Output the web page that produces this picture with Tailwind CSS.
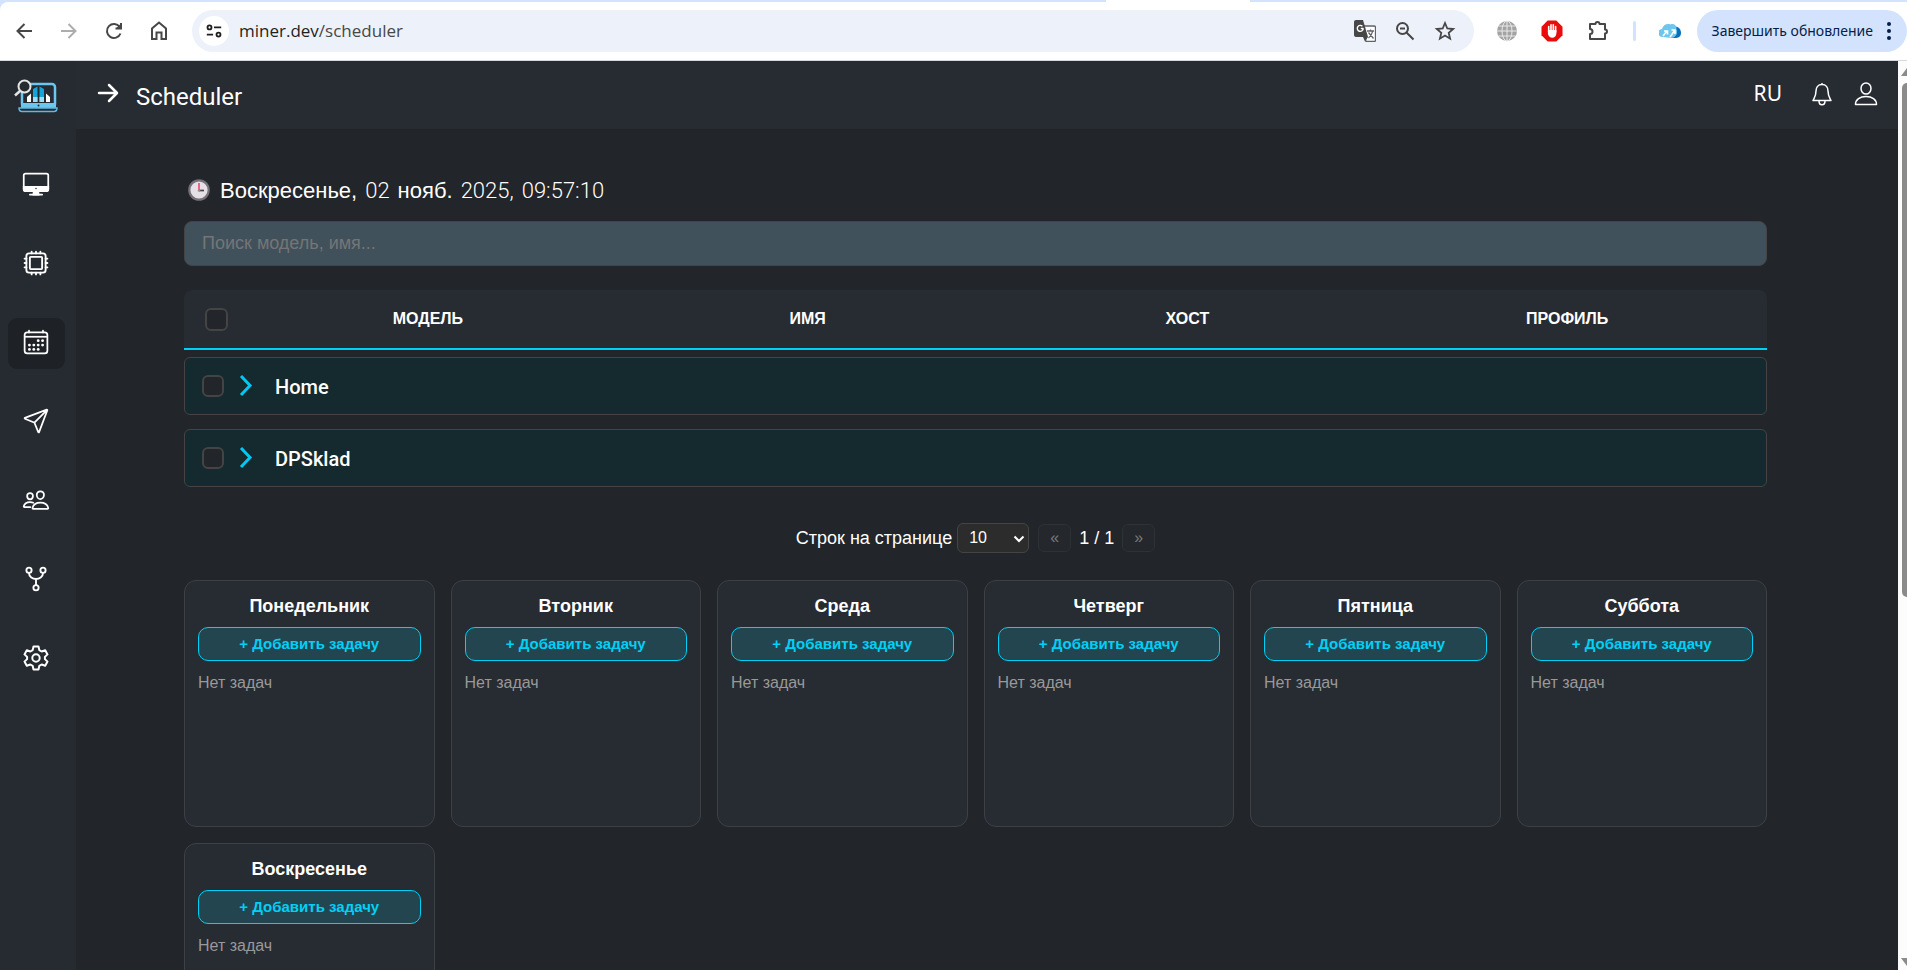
<!-- index.html -->
<!DOCTYPE html>
<html lang="ru">
<head>
    <meta charset="UTF-8">
    <meta name="viewport" content="width=device-width, initial-scale=1.0">
    <title>Scheduler</title>
    <script src="https://cdn.jsdelivr.net/npm/@tailwindcss/browser@4"></script>
</head>
<body class="h-screen flex flex-col overflow-hidden bg-[#222529] text-white font-['Liberation_Sans',sans-serif]">
    <!-- Browser toolbar -->
    <div class="shrink-0 bg-[#d3e3fd]">
        <!-- Bottom edge of the active tab -->
        <div class="h-0.5 pl-[58%]">
            <div class="w-36 h-full bg-white"></div>
        </div>
        <div class="flex items-center h-[59px] rounded-tl-lg bg-white border-b border-[#d5d8dc] text-[#474747] font-['Open_Sans',sans-serif]">
            <div class="flex items-center gap-[21px] pl-3 pr-[21px]">
                <button aria-label="Back">
                    <svg class="w-6 h-6" viewBox="0 0 24 24" fill="none" stroke="currentColor" stroke-width="2"><path d="M20 12H5.500M12.500 5l-7 7 7 7"/></svg>
                </button>
                <button aria-label="Forward" class="text-[#adadad]">
                    <svg class="w-6 h-6" viewBox="0 0 24 24" fill="none" stroke="currentColor" stroke-width="2"><path d="M4 12h14.500M11.500 5l7 7-7 7"/></svg>
                </button>
                <button aria-label="Reload">
                    <svg class="w-6 h-6" viewBox="0 0 24 24" fill="none" stroke="currentColor" stroke-width="2"><path d="M18.500 14.500a7 7 0 1 1-.8-6.500M19 4v5.500h-5.500"/><path d="M19 4.500v5h-5z" fill="currentColor" stroke="none"/></svg>
                </button>
                <button aria-label="Home">
                    <svg class="w-6 h-6" viewBox="0 0 24 24" fill="none" stroke="currentColor" stroke-width="2"><path d="M5 20V9.500l7-6 7 6V20h-4.500v-6.500h-5V20z"/></svg>
                </button>
            </div>
            <div class="flex flex-1 items-center h-[42px] rounded-full bg-[#edf1fa] pl-[7px] pr-[18px]">
                <span class="flex items-center justify-center w-[30px] h-[30px] rounded-full bg-white text-[#1f1f1f]">
                    <svg class="w-[18px] h-[18px]" viewBox="0 0 20 20" fill="none" stroke="currentColor" stroke-width="2"><circle cx="5" cy="6" r="2.200"/><path d="M10 6h8M2 14h7"/><circle cx="15" cy="14" r="2.200"/></svg>
                </span>
                <span class="flex-1 pl-2.5 text-[17px] leading-6 text-[#474747]"><span class="text-[#1f1f1f]">miner.dev</span>/scheduler</span>
                <div class="flex items-center gap-[18px]">
                    <svg class="w-[22px] h-[22px]" viewBox="0 0 22 22"><path d="M9 6h11a1.500 1.500 0 0 1 1.500 1.500V20a1.500 1.500 0 0 1-1.500 1.500h-8z" fill="#fff" stroke="#5f6368" stroke-width="1.300"/><path d="M2 0h7l5 17H2a2 2 0 0 1-2-2V2a2 2 0 0 1 2-2z" fill="#474747"/><path d="M9 17h5l-3 4.500z" fill="#474747"/><path d="M9.500 8.500H6.800M9.300 8.500a3 3 0 1 1-.9-2.300" fill="none" stroke="#fff" stroke-width="1.400"/><path d="M13 11h7M16.500 9.500V11M14.500 12.500l5 6M18.500 11.500c-.5 3-2 5-4 6.500" fill="none" stroke="#5f6368" stroke-width="1.300"/></svg>
                    <svg class="w-[22px] h-[22px]" viewBox="0 0 22 22" fill="none" stroke="currentColor" stroke-width="2"><circle cx="8.500" cy="8.500" r="5.500"/><path d="M12.500 12.500l7 7M6 8.500h5"/></svg>
                    <svg class="w-[22px] h-[22px]" viewBox="0 0 22 22" fill="none" stroke="currentColor" stroke-width="1.800"><path d="M11 3l2.300 5.500 5.900.5-4.500 3.900 1.400 5.800L11 15.600l-5.100 3.100 1.400-5.800L2.800 9l5.900-.5z"/></svg>
                </div>
            </div>
            <div class="flex items-center gap-[23px] pl-[22px] pr-4">
                <svg class="w-[22px] h-[22px]" viewBox="0 0 22 22"><circle cx="11" cy="11" r="10" fill="#a3a3a3"/><g fill="none" stroke="#e9e9e9" stroke-width="1"><ellipse cx="11" cy="11" rx="5" ry="10"/><path d="M11 1v20M1 11h20M2.500 6h17M2.500 16h17"/></g></svg>
                <svg class="w-[22px] h-[22px]" viewBox="0 0 22 22"><path d="M6.700.5h8.600l6.200 6.200v8.600l-6.200 6.200H6.700L.5 15.300V6.700z" fill="#e80c0c"/><path d="M7.700 12V6.500M10 10V4.800M12.300 10V4.800M14.600 12V6.500" stroke="#fff" stroke-width="1.600" stroke-linecap="round"/><path d="M6.900 10h8.500v3c0 3-1.800 4.700-4.200 4.700-2.300 0-3.300-1.200-4.300-3.700z" fill="#fff"/></svg>
                <svg class="w-6 h-6" viewBox="0 0 24 24" fill="none" stroke="currentColor" stroke-width="2" stroke-linejoin="round"><path d="M4 5h5.500a2 2 0 0 1 4 0H19v5.500a2 2 0 0 1 0 4V20H4v-5a2.500 2.500 0 0 0 0-5z"/></svg>
                <span class="w-[3px] h-5 rounded bg-[#d3e3fd]"></span>
                <svg class="w-[22px] h-4" viewBox="0 0 22 16"><path d="M15 4c4-1 7 2 7 6s-3 5-6 5h-4z" fill="#0a6fb8"/><path d="M4 14a4 4 0 0 1-1-8C4 2 8 0 11.500 1.500 15 0 18 3 17.500 6.500c2 3-1 8.500-5 8.500z" fill="#6ec6ee"/><path d="M4 13l4-5M5 8h3.500v3.500M11 14l5-7M12.500 7H16v4" fill="none" stroke="#fff" stroke-width="1.600"/></svg>
            </div>
            <button class="flex items-center gap-[13px] h-[42px] rounded-full bg-[#d3e3fd] pl-[15px] pr-[15px] text-sm text-[#041e49] font-['Noto_Sans',sans-serif]">
                Завершить обновление
                <svg class="w-1.5 h-5" viewBox="0 0 6 20" fill="currentColor"><circle cx="3" cy="3" r="2"/><circle cx="3" cy="10" r="2"/><circle cx="3" cy="17" r="2"/></svg>
            </button>
        </div>
    </div>

    <div class="flex flex-1 min-h-0">
        <!-- Sidebar -->
        <aside class="shrink-0 flex flex-col items-center w-[76px] bg-[#262a31] pr-1 pt-[17px]">
            <a href="#" aria-label="Miner">
                <svg class="w-[46px] h-9" viewBox="0 0 46 36"><rect x="9" y="6" width="33" height="23" rx="3" fill="#262a31" stroke="#6cc7ee" stroke-width="2.500"/><path d="M8 25h35v5H8z" fill="#6cc7ee"/><path d="M6 30h38c0 2.500-1 3.500-3 3.500H9c-2 0-3-1-3-3.500z" fill="#262a31" stroke="#5fb8e0" stroke-width="1.500"/><circle cx="25.500" cy="27.500" r="1" fill="#1d2a33"/><path d="M14 19l4-3.500V24h-4zM33 15.500l4 3.500v5h-4z" fill="#fff"/><path d="M20 11l4.500-2.500V24H20zM26.500 8.500L31 11v13h-4.500z" fill="#12a5d8"/><path d="M20 19h4.500v5H20zM26.500 19H31v5h-4.500z" fill="#9adff5"/><circle cx="11.500" cy="8.500" r="6" fill="#262a31" stroke="#e5e5e5" stroke-width="2"/><path d="M7 13l-5 4.500" stroke="#e5e5e5" stroke-width="2.500"/></svg>
            </a>
            <nav class="flex flex-col gap-7 mt-[46px]">
                <a href="#" aria-label="Monitoring" class="flex items-center justify-center w-[57px] h-[51px] rounded-[9px] pb-1">
                    <svg class="w-7 h-7" viewBox="0 0 512 512" fill="none" stroke="currentColor" stroke-width="32"><rect x="32" y="64" width="448" height="320" rx="32"/><path d="M32 308h448v44a32 32 0 0 1-32 32H64a32 32 0 0 1-32-32z" fill="currentColor"/><path d="M304 448l-8-64h-80l-8 64z" fill="currentColor"/><path d="M368 448H144" stroke-linecap="round"/><circle cx="256" cy="340" r="14" fill="#262a31" stroke="none"/></svg>
                </a>
                <a href="#" aria-label="Devices" class="flex items-center justify-center w-[57px] h-[51px] rounded-[9px] pb-1">
                    <svg class="w-7 h-7" viewBox="0 0 512 512" fill="none" stroke="currentColor" stroke-width="34" stroke-linecap="round" stroke-linejoin="round"><rect x="80" y="80" width="352" height="352" rx="48"/><rect x="144" y="144" width="224" height="224" rx="16"/><path d="M256 80V48M336 80V48M176 80V48M256 464v-32M336 464v-32M176 464v-32M432 256h32M432 336h32M432 176h32M48 256h32M48 336h32M48 176h32"/></svg>
                </a>
                <a href="#" aria-label="Scheduler" class="flex items-center justify-center w-[57px] h-[51px] rounded-[9px] pb-1 bg-[#1e2227]">
                    <svg class="w-7 h-7" viewBox="0 0 512 512" fill="none" stroke="currentColor" stroke-width="32" stroke-linejoin="round"><rect x="48" y="80" width="416" height="384" rx="48"/><path d="M128 48v32M384 48v32" stroke-linecap="round"/><path d="M464 160H48"/><g fill="currentColor" stroke="none"><circle cx="296" cy="232" r="26"/><circle cx="376" cy="232" r="26"/><circle cx="296" cy="312" r="26"/><circle cx="376" cy="312" r="26"/><circle cx="136" cy="312" r="26"/><circle cx="216" cy="312" r="26"/><circle cx="136" cy="392" r="26"/><circle cx="216" cy="392" r="26"/><circle cx="296" cy="392" r="26"/></g></svg>
                </a>
                <a href="#" aria-label="Messages" class="flex items-center justify-center w-[57px] h-[51px] rounded-[9px] pb-1">
                    <svg class="w-7 h-7" viewBox="0 0 512 512" fill="none" stroke="currentColor" stroke-width="32" stroke-linecap="round" stroke-linejoin="round"><path d="M53.120 199.940l400-151.390a8 8 0 0 1 10.330 10.330l-151.390 400a8 8 0 0 1-15-.34l-67.400-166.090a16 16 0 0 0-10.110-10.110L53.460 215a8 8 0 0 1-.34-15.060zM460 52L227 285"/></svg>
                </a>
                <a href="#" aria-label="Users" class="flex items-center justify-center w-[57px] h-[51px] rounded-[9px] pb-1">
                    <svg class="w-7 h-7" viewBox="0 0 512 512" fill="none" stroke="currentColor" stroke-width="32" stroke-linecap="round" stroke-linejoin="round"><path d="M402 168c-2.930 40.670-33.100 72-66 72s-63.120-31.320-66-72c-3-42.310 26.370-72 66-72s69 30.460 66 72z"/><path d="M336 304c-65.170 0-127.840 32.370-143.540 95.410-2.080 8.340 3.150 16.590 11.720 16.590h263.650c8.570 0 13.770-8.250 11.720-16.590C463.850 335.360 401.180 304 336 304z"/><path d="M200 185.940c-2.340 32.480-26.720 58.060-53 58.060s-50.700-25.570-53-58.060C91.610 152.150 115.340 128 147 128s55.390 24.770 53 57.940z"/><path d="M206 306c-18.050-8.270-37.930-11.450-59-11.450-52 0-102.100 25.850-114.650 76.200-1.650 6.660 2.530 13.250 9.370 13.250H154"/></svg>
                </a>
                <a href="#" aria-label="Pools" class="flex items-center justify-center w-[57px] h-[51px] rounded-[9px] pb-1">
                    <svg class="w-7 h-7" viewBox="0 0 512 512" fill="none" stroke="currentColor" stroke-width="34" stroke-linecap="round"><circle cx="128" cy="96" r="48"/><circle cx="256" cy="416" r="48"/><circle cx="384" cy="96" r="48"/><path d="M256 256v112M128 144c0 74.670 68.920 112 128 112M384 144c0 74.670-68.920 112-128 112"/></svg>
                </a>
                <a href="#" aria-label="Settings" class="flex items-center justify-center w-[57px] h-[51px] rounded-[9px] pb-1">
                    <svg class="w-7 h-7" viewBox="0 0 28 28" fill="none" stroke="currentColor" stroke-width="2" stroke-linejoin="round"><path d="M11.500 2.500h5l.8 3.600 2.400 1.400 3.500-1.300 2.300 4.200-2.600 2.500v2.200l2.600 2.500-2.300 4.200-3.500-1.300-2.400 1.400-.8 3.600h-5l-.8-3.600-2.400-1.400-3.500 1.300-2.300-4.200 2.600-2.500v-2.200l-2.600-2.500 2.300-4.200 3.500 1.300 2.400-1.400z"/><circle cx="14" cy="14" r="3.700"/></svg>
                </a>
            </nav>
        </aside>

        <div class="flex flex-col flex-1 min-w-0">
            <!-- Top bar -->
            <header class="shrink-0 flex items-center h-[68px] bg-[#272b32] pl-5 pr-5">
                <button aria-label="Expand menu" class="pb-1">
                    <svg class="w-6 h-6" viewBox="0 0 24 24" fill="none" stroke="currentColor" stroke-width="2.500" stroke-linecap="round" stroke-linejoin="round"><path d="M3 12h17.500M13 4l8 8-8 8"/></svg>
                </button>
                <h1 class="pl-4 pt-1 text-2xl font-['Roboto',sans-serif]">Scheduler</h1>
                <div class="flex items-center ml-auto pb-0.5">
                    <button class="text-[21px] font-['Noto_Sans',sans-serif]">RU</button>
                    <button aria-label="Notifications" class="pl-7">
                        <svg class="w-6 h-6" viewBox="0 0 24 24" fill="none" stroke="currentColor" stroke-width="1.500" stroke-linejoin="round"><path d="M12 1v2M12 2.500c-4 0-6 3-6 6.500 0 5-1.500 6.500-3 9.500h18c-1.500-3-3-4.500-3-9.500 0-3.500-2-6.500-6-6.500zM9 19c0 5 6 5 6 0"/></svg>
                    </button>
                    <button aria-label="Profile" class="pl-5">
                        <svg class="w-6 h-6" viewBox="0 0 24 24" fill="none" stroke="currentColor" stroke-width="1.500" stroke-linejoin="round"><ellipse cx="12" cy="6.500" rx="5" ry="5.500"/><path d="M1.500 22.500C1.500 17.500 6 14.500 12 14.500s10.500 3 10.500 8z"/></svg>
                    </button>
                </div>
            </header>

            <main class="flex-1 min-h-0 overflow-hidden pl-[108px] pr-[131px] pt-11">
                <!-- Current date -->
                <div class="flex items-center gap-2 h-[34px] pl-1 text-[22px]">
                    <svg class="w-[22px] h-[22px] mr-0.5" viewBox="0 0 22 22"><circle cx="11" cy="11" r="9.700" fill="#e6e0e6" stroke="#75717a" stroke-width="2.200"/><path d="M11 4v7" stroke="#f0405a" stroke-width="1.500"/><path d="M11 11.500h5" stroke="#45424a" stroke-width="1.700"/><circle cx="11" cy="11.500" r="1.300" fill="#998f9a"/></svg>
                    <span>Воскресенье,</span>
                    <span class="font-light font-['Roboto',sans-serif]">02</span>
                    <span>нояб.</span>
                    <span class="font-light font-['Roboto',sans-serif]">2025,</span>
                    <span class="font-light font-['Roboto',sans-serif]">09:57:10</span>
                </div>

                <input type="text" aria-label="Поиск" placeholder="Поиск модель, имя..."
                       class="block w-full h-[45px] mt-3.5 px-[17px] rounded-lg border border-[#444444] bg-[#40515c] text-lg placeholder:text-[#757575] focus:outline-none">

                <!-- Miners table -->
                <table class="w-full mt-6 table-fixed border-separate border-spacing-0">
                    <colgroup>
                        <col class="w-[54px]">
                        <col>
                        <col>
                        <col>
                        <col>
                        <col class="w-2.5">
                    </colgroup>
                    <thead>
                        <tr class="h-[60px] bg-[#272b32] text-base">
                            <th class="rounded-tl-lg border-b-2 border-[#00d0f5] pl-[21px] text-left">
                                <input type="checkbox" aria-label="Выбрать все" class="block appearance-none w-[23px] h-[23px] rounded-md border-2 border-[#444444] bg-[#222529] checked:bg-[#00d0f5]">
                            </th>
                            <th class="border-b-2 border-[#00d0f5]">МОДЕЛЬ</th>
                            <th class="border-b-2 border-[#00d0f5]">ИМЯ</th>
                            <th class="border-b-2 border-[#00d0f5]">ХОСТ</th>
                            <th class="border-b-2 border-[#00d0f5]">ПРОФИЛЬ</th>
                            <td class="rounded-tr-lg border-b-2 border-[#00d0f5]"></td>
                        </tr>
                    </thead>
                    <tbody>
                        <tr>
                            <td colspan="6" class="py-[7px]">
                                <div class="flex items-center h-[58px] rounded-md border border-[#444444] bg-[#142a2e] pl-[17px]">
                                    <input type="checkbox" id="groupHome" class="appearance-none w-[22px] h-[22px] rounded-md border-2 border-[#444444] bg-[#222529] checked:bg-[#00d0f5]">
                                    <svg class="w-3.5 h-[22px] ml-[15px]" viewBox="0 0 14 22" fill="none" stroke="#00c8f0" stroke-width="3"><path d="M2 1l9 9.500L2 20"/></svg>
                                    <label for="groupHome" class="pl-[22px] pt-0.5 text-xl font-medium font-['Roboto',sans-serif]">Home</label>
                                </div>
                            </td>
                        </tr>
                        <tr>
                            <td colspan="6" class="py-[7px]">
                                <div class="flex items-center h-[58px] rounded-md border border-[#444444] bg-[#142a2e] pl-[17px]">
                                    <input type="checkbox" id="groupDPSklad" class="appearance-none w-[22px] h-[22px] rounded-md border-2 border-[#444444] bg-[#222529] checked:bg-[#00d0f5]">
                                    <svg class="w-3.5 h-[22px] ml-[15px]" viewBox="0 0 14 22" fill="none" stroke="#00c8f0" stroke-width="3"><path d="M2 1l9 9.500L2 20"/></svg>
                                    <label for="groupDPSklad" class="pl-[22px] pt-0.5 text-xl font-medium font-['Roboto',sans-serif]">DPSklad</label>
                                </div>
                            </td>
                        </tr>
                    </tbody>
                </table>

                <!-- Pagination -->
                <div class="flex items-center justify-center h-[30px] mt-[29px] text-lg">
                    <label for="pageSize">Строк на странице</label>
                    <div class="relative ml-[5px]">
                        <select id="pageSize" class="block appearance-none w-[72px] h-[30px] pl-[11px] rounded-md border border-[#444444] bg-[#2c2c2c] text-base leading-7">
                            <option>10</option>
                            <option>25</option>
                            <option>50</option>
                        </select>
                        <svg class="absolute right-1 top-2.5 w-3 h-3 pointer-events-none" viewBox="0 0 12 12" fill="none" stroke="currentColor" stroke-width="2"><path d="M1.500 3.500L6 8l4.500-4.500"/></svg>
                    </div>
                    <button disabled class="w-[33px] h-7 ml-[9px] rounded-md border border-[#2e3135] bg-[#24272b] text-base leading-6 text-[#7a7a7a]">«</button>
                    <span class="px-2">1 / 1</span>
                    <button disabled class="w-[33px] h-7 rounded-md border border-[#2e3135] bg-[#24272b] text-base leading-6 text-[#7a7a7a]">»</button>
                </div>

                <!-- Week -->
                <div class="grid grid-cols-6 gap-4 mt-[27px]">
                    <section class="min-h-[247px] rounded-xl border border-[#3e4044] bg-[#272b32] p-[13px]">
                        <h2 class="text-center text-lg leading-6 font-bold">Понедельник</h2>
                        <button class="w-full h-[34px] mt-[9px] rounded-[10px] border border-[#00d0f5] bg-[#23454f] text-[15px] leading-6 font-bold text-[#00d0f5]">+ Добавить задачу</button>
                        <p class="mt-2.5 text-base text-[#999999]">Нет задач</p>
                    </section>
                    <section class="min-h-[247px] rounded-xl border border-[#3e4044] bg-[#272b32] p-[13px]">
                        <h2 class="text-center text-lg leading-6 font-bold">Вторник</h2>
                        <button class="w-full h-[34px] mt-[9px] rounded-[10px] border border-[#00d0f5] bg-[#23454f] text-[15px] leading-6 font-bold text-[#00d0f5]">+ Добавить задачу</button>
                        <p class="mt-2.5 text-base text-[#999999]">Нет задач</p>
                    </section>
                    <section class="min-h-[247px] rounded-xl border border-[#3e4044] bg-[#272b32] p-[13px]">
                        <h2 class="text-center text-lg leading-6 font-bold">Среда</h2>
                        <button class="w-full h-[34px] mt-[9px] rounded-[10px] border border-[#00d0f5] bg-[#23454f] text-[15px] leading-6 font-bold text-[#00d0f5]">+ Добавить задачу</button>
                        <p class="mt-2.5 text-base text-[#999999]">Нет задач</p>
                    </section>
                    <section class="min-h-[247px] rounded-xl border border-[#3e4044] bg-[#272b32] p-[13px]">
                        <h2 class="text-center text-lg leading-6 font-bold">Четверг</h2>
                        <button class="w-full h-[34px] mt-[9px] rounded-[10px] border border-[#00d0f5] bg-[#23454f] text-[15px] leading-6 font-bold text-[#00d0f5]">+ Добавить задачу</button>
                        <p class="mt-2.5 text-base text-[#999999]">Нет задач</p>
                    </section>
                    <section class="min-h-[247px] rounded-xl border border-[#3e4044] bg-[#272b32] p-[13px]">
                        <h2 class="text-center text-lg leading-6 font-bold">Пятница</h2>
                        <button class="w-full h-[34px] mt-[9px] rounded-[10px] border border-[#00d0f5] bg-[#23454f] text-[15px] leading-6 font-bold text-[#00d0f5]">+ Добавить задачу</button>
                        <p class="mt-2.5 text-base text-[#999999]">Нет задач</p>
                    </section>
                    <section class="min-h-[247px] rounded-xl border border-[#3e4044] bg-[#272b32] p-[13px]">
                        <h2 class="text-center text-lg leading-6 font-bold">Суббота</h2>
                        <button class="w-full h-[34px] mt-[9px] rounded-[10px] border border-[#00d0f5] bg-[#23454f] text-[15px] leading-6 font-bold text-[#00d0f5]">+ Добавить задачу</button>
                        <p class="mt-2.5 text-base text-[#999999]">Нет задач</p>
                    </section>
                    <section class="min-h-[247px] rounded-xl border border-[#3e4044] bg-[#272b32] p-[13px]">
                        <h2 class="text-center text-lg leading-6 font-bold">Воскресенье</h2>
                        <button class="w-full h-[34px] mt-[9px] rounded-[10px] border border-[#00d0f5] bg-[#23454f] text-[15px] leading-6 font-bold text-[#00d0f5]">+ Добавить задачу</button>
                        <p class="mt-2.5 text-base text-[#999999]">Нет задач</p>
                    </section>
                </div>
            </main>
        </div>

        <!-- Scrollbar -->
        <div class="shrink-0 flex flex-col items-end w-[9px] bg-[#fcfcfc] pt-[7px]">
            <svg class="w-1.5 h-2" viewBox="0 0 6 8"><path d="M0 8l6-8v8z" fill="#8b8b8b"/></svg>
            <div class="w-[5px] h-[57%] mt-[7px] rounded-l-md bg-[#8b8b8b]"></div>
            <svg class="w-1.5 h-2 mt-auto mb-1" viewBox="0 0 6 8"><path d="M0 0h6v8z" fill="#8b8b8b"/></svg>
        </div>
    </div>
</body>
</html>
